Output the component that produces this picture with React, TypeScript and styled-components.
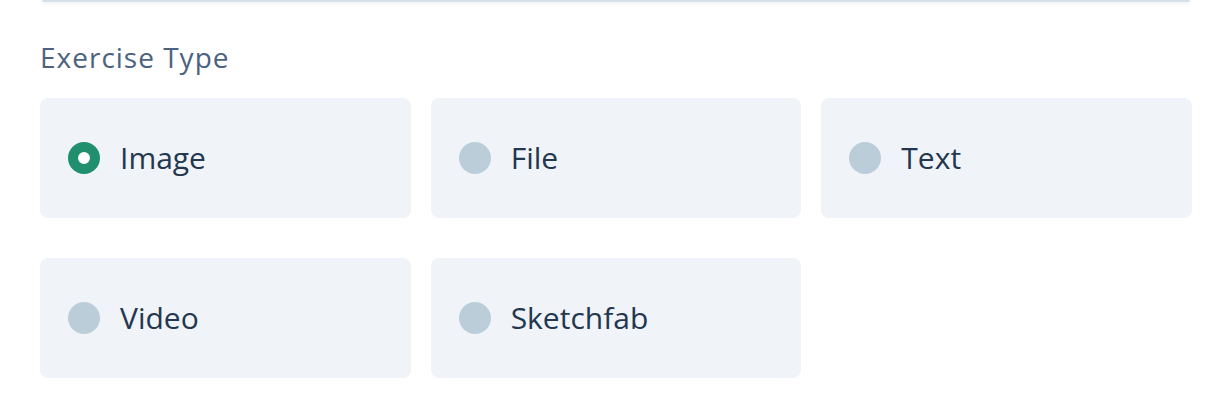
import React, { useState } from 'react';
import styled, { createGlobalStyle } from 'styled-components';

const GlobalStyle = createGlobalStyle`
  body {
    margin: 0;
    background: #ffffff;
    font-family: 'Open Sans', 'Liberation Sans', sans-serif;
  }
`;

const Page = styled.div`
  width: 1228px;
  height: 416px;
  overflow: hidden;
  box-sizing: border-box;
  padding: 0 36px 0 40px;
`;

const PrevBoxEdge = styled.div`
  height: 2px;
  margin: 0 2px;
  background: #d6dee7;
  border-radius: 0 0 2px 2px;
  box-shadow: 0 2px 3px rgba(200, 210, 222, 0.35);
`;

const Label = styled.div`
  margin-top: 37px;
  font-size: 28px;
  line-height: 36px;
  letter-spacing: 1px;
  color: #4b6380;
`;

const Grid = styled.div`
  margin-top: 23px;
  display: grid;
  grid-template-columns: repeat(3, 1fr);
  column-gap: 20px;
  row-gap: 40px;
  width: 1152px;
`;

const Option = styled.label`
  display: flex;
  align-items: center;
  gap: 20px;
  height: 120px;
  box-sizing: border-box;
  padding: 0 28px;
  background: #f0f3f8;
  border-radius: 8px;
  cursor: pointer;
`;

const Radio = styled.span<{ $checked: boolean }>`
  width: 32px;
  height: 32px;
  border-radius: 50%;
  flex-shrink: 0;
  box-sizing: border-box;
  background: ${(p) => (p.$checked ? '#ffffff' : '#bccdda')};
  border: ${(p) => (p.$checked ? '10px solid #1f8f6e' : 'none')};
`;

const OptionText = styled.span`
  font-size: 30px;
  line-height: 40px;
  color: #23374f;
`;

const types = ['Image', 'File', 'Text', 'Video', 'Sketchfab'];

export default function App() {
  const [selected, setSelected] = useState('Image');
  return (
    <>
      <GlobalStyle />
      <Page>
        <PrevBoxEdge />
        <Label>Exercise Type</Label>
        <Grid>
          {types.map((t) => (
            <Option key={t} onClick={() => setSelected(t)}>
              <Radio $checked={selected === t} />
              <OptionText>{t}</OptionText>
            </Option>
          ))}
        </Grid>
      </Page>
    </>
  );
}
